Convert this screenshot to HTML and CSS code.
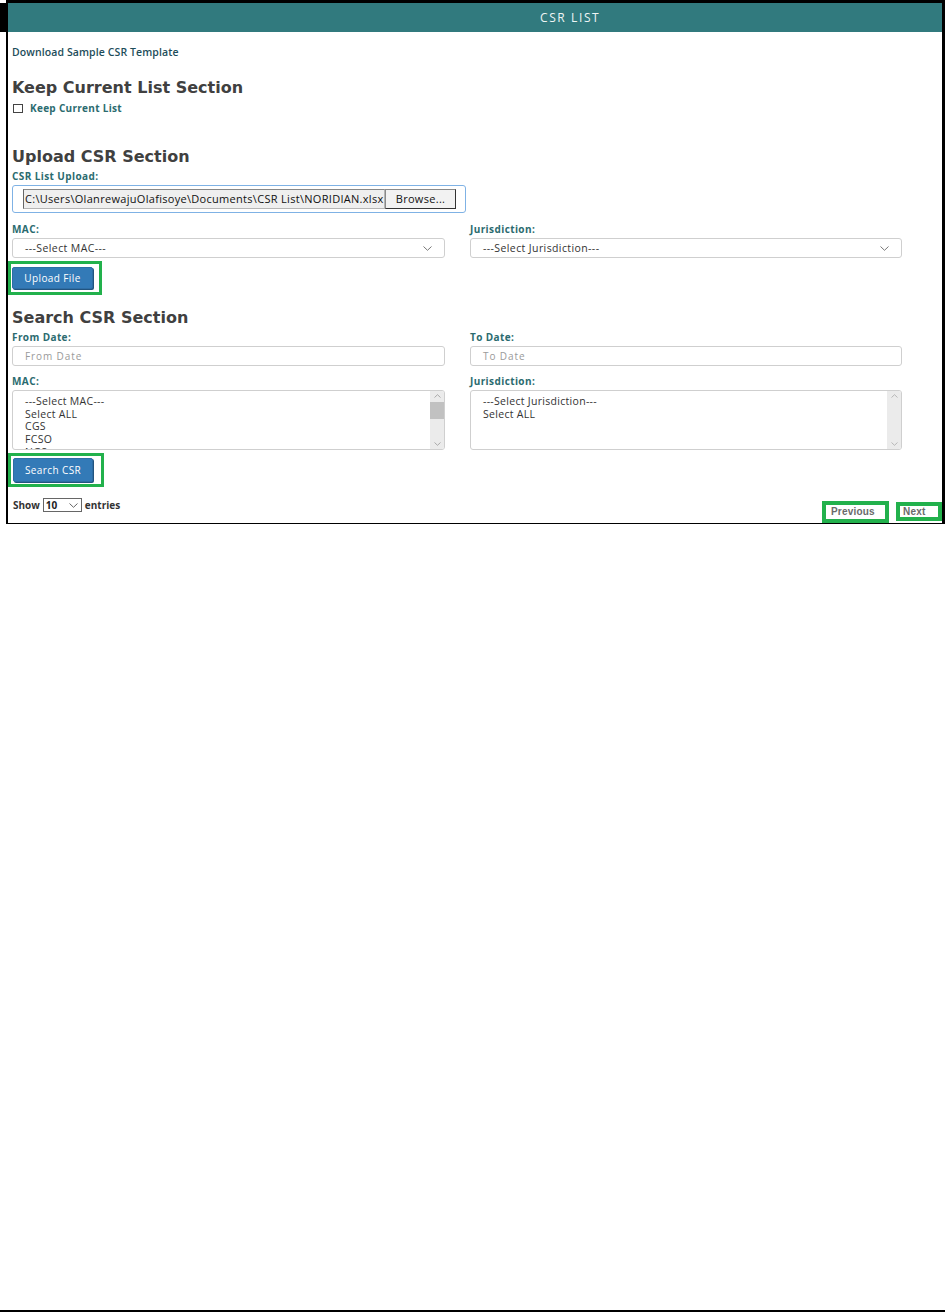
FILE: index.html
```html
<!DOCTYPE html>
<html lang="en">
<head>
  <meta charset="UTF-8" />
  <meta name="viewport" content="width=device-width, initial-scale=1.0"/>
  <title>CSR List</title>
  <link rel="stylesheet" href="styles.css">
</head>
<body>

<div class="shot">
  <header class="topbar">CSR LIST</header>

  <div class="content">
    <a class="download" href="#">Download Sample CSR Template</a>

    <h2 class="section-title first">Keep Current List Section</h2>
    <label class="check-row"><span class="checkbox"></span>Keep Current List</label>

    <h2 class="section-title upload-title">Upload CSR Section</h2>
    <div class="field-label gap-top">CSR List Upload:</div>
    <div class="file-box">
      <div class="file-path">C:\Users\OlanrewajuOlafisoye\Documents\CSR List\NORIDIAN.xlsx</div>
      <div class="browse">Browse...</div>
    </div>

    <div class="two-col upload-row">
      <div class="col left">
        <div class="field-label">MAC:</div>
        <div class="select">
          <span>---Select MAC---</span>
          <svg class="chev" width="9" height="5" viewBox="0 0 9 5"><path d="M0.5 0.5 L4.5 4.3 L8.5 0.5" fill="none" stroke="#777" stroke-width="1"/></svg>
        </div>
      </div>
      <div class="col right">
        <div class="field-label">Jurisdiction:</div>
        <div class="select">
          <span>---Select Jurisdiction---</span>
          <svg class="chev" width="9" height="5" viewBox="0 0 9 5"><path d="M0.5 0.5 L4.5 4.3 L8.5 0.5" fill="none" stroke="#777" stroke-width="1"/></svg>
        </div>
      </div>
    </div>

    <div class="hilite hilite-upload"><button class="btn-primary upload-btn">Upload File</button></div>

    <h2 class="section-title search-title">Search CSR Section</h2>

    <div class="two-col date-row">
      <div class="col left">
        <div class="field-label">From Date:</div>
        <div class="text-input">From Date</div>
      </div>
      <div class="col right">
        <div class="field-label">To Date:</div>
        <div class="text-input">To Date</div>
      </div>
    </div>

    <div class="two-col list-row">
      <div class="col left">
        <div class="field-label">MAC:</div>
        <div class="listbox">
          <div class="options">
            <div>---Select MAC---</div>
            <div>Select ALL</div>
            <div>CGS</div>
            <div>FCSO</div>
            <div>NGS</div>
          </div>
          <div class="scrollbar">
            <svg class="arrow" width="7" height="4" viewBox="0 0 7 4"><path d="M0.5 3.5 L3.5 0.7 L6.5 3.5" fill="none" stroke="#999" stroke-width="0.8"/></svg>
            <div class="thumb"></div>
            <div class="track"></div>
            <svg class="arrow" width="7" height="4" viewBox="0 0 7 4"><path d="M0.5 0.5 L3.5 3.3 L6.5 0.5" fill="none" stroke="#999" stroke-width="0.8"/></svg>
          </div>
        </div>
      </div>
      <div class="col right">
        <div class="field-label">Jurisdiction:</div>
        <div class="listbox">
          <div class="options">
            <div>---Select Jurisdiction---</div>
            <div>Select ALL</div>
          </div>
          <div class="scrollbar">
            <svg class="arrow" width="7" height="4" viewBox="0 0 7 4"><path d="M0.5 3.5 L3.5 0.7 L6.5 3.5" fill="none" stroke="#aaa" stroke-width="0.8"/></svg>
            <div class="track"></div>
            <svg class="arrow" width="7" height="4" viewBox="0 0 7 4"><path d="M0.5 0.5 L3.5 3.3 L6.5 0.5" fill="none" stroke="#aaa" stroke-width="0.8"/></svg>
          </div>
        </div>
      </div>
    </div>

    <div class="hilite hilite-search"><button class="btn-primary search-btn">Search CSR</button></div>

    <div class="table-foot">
      <div class="length">
        Show
        <span class="length-select">10
          <svg width="9" height="5" viewBox="0 0 9 5"><path d="M0.5 0.5 L4.5 4.3 L8.5 0.5" fill="none" stroke="#666" stroke-width="1"/></svg>
        </span>
        entries
      </div>
      <div class="pager">
        <span class="page-btn prev">Previous</span>
        <span class="page-btn next">Next</span>
      </div>
    </div>
  </div>
</div>

<div class="page-end"></div>

</body>
</html>
```

FILE: styles.css
```css
body { margin: 0; font-family: "Open Sans", "DejaVu Sans", sans-serif; background: #fff; color: #333; }

.shot {
  margin-left: 6px;
  border-top: 3px solid #000;
  border-left: 2px solid #000;
  border-right: 3px solid #000;
  border-bottom: 1px solid #000;
}
.topbar {
  height: 29px;
  line-height: 29px;
  background: #317a7e;
  color: #eef5f5;
  font-size: 12px;
  letter-spacing: 1.6px;
  padding-left: 532px;
  box-shadow: -8px 0 0 #000;
}
.content { padding: 13px 40px 0 4px; }

.download {
  display: block;
  font-size: 10.5px;
  line-height: 14px;
  font-weight: 600;
  color: #1d4d5a;
  text-decoration: none;
  letter-spacing: 0.1px;
}

.section-title {
  margin: 0;
  font-family: "DejaVu Sans", sans-serif;
  font-weight: bold;
  font-size: 16px;
  line-height: 18px;
  color: #404040;
}
.section-title.first { margin-top: 20px; }
.upload-title { margin-top: 33px; }
.search-title { margin-top: 14px; }

.check-row {
  display: flex;
  align-items: center;
  gap: 7px;
  margin-top: 4px;
  height: 14px;
  font-size: 10px;
  font-weight: bold;
  color: #2b6b6f;
  letter-spacing: 0.3px;
}
.checkbox {
  width: 8px;
  height: 7px;
  margin-left: 1px;
  border: 1px solid #444;
  background: #fff;
}

.field-label {
  font-size: 10px;
  line-height: 12px;
  font-weight: bold;
  color: #2b6b6f;
  letter-spacing: 0.4px;
  margin-bottom: 3px;
}
.gap-top { margin-top: 4px; }

.file-box {
  box-sizing: border-box;
  width: 454px;
  height: 28px;
  display: flex;
  align-items: center;
  padding: 0 9px 0 10px;
  border: 1px solid #7fb2e5;
  border-radius: 3px;
}
.file-path {
  flex: 1;
  box-sizing: border-box;
  height: 20px;
  line-height: 18px;
  padding-left: 1px;
  background: #efefef;
  border: 1px solid #b5b5b5;
  border-left-color: #666;
  border-top-color: #888;
  font-size: 11px;
  letter-spacing: 0.3px;
  color: #111;
  white-space: nowrap;
  overflow: hidden;
}
.browse {
  box-sizing: border-box;
  width: 71px;
  height: 20px;
  line-height: 18px;
  text-align: center;
  background: #f2f2f2;
  border: 1px solid #8a8a8a;
  border-right-color: #333;
  border-bottom-color: #333;
  font-size: 11px;
  letter-spacing: 0.3px;
  color: #111;
}

.two-col { display: flex; gap: 25px; }
.col.left { flex: 0 0 433px; }
.col.right { flex: 0 0 432px; }
.upload-row { margin-top: 10px; }
.date-row { margin-top: 4px; }
.list-row { margin-top: 9px; }

.select, .text-input {
  box-sizing: border-box;
  height: 20px;
  display: flex;
  align-items: center;
  justify-content: space-between;
  padding: 0 12px;
  border: 1px solid #cfcfcf;
  border-radius: 3px;
  font-size: 10.5px;
  letter-spacing: 0.4px;
  color: #333;
}
.text-input {
  justify-content: flex-start;
  color: #9a9a9a;
  font-size: 10px;
  letter-spacing: 0.9px;
}

.listbox {
  box-sizing: border-box;
  height: 60px;
  display: flex;
  border: 1px solid #cfcfcf;
  border-radius: 3px;
  overflow: hidden;
}
.options {
  flex: 1;
  padding: 4px 12px;
  font-size: 10.5px;
  line-height: 12.7px;
  letter-spacing: 0.3px;
  color: #333;
  overflow: hidden;
}
.scrollbar {
  width: 14px;
  display: flex;
  flex-direction: column;
  align-items: center;
  background: #ebebeb;
}
.scrollbar .arrow { margin: 3px 0; flex: none; }
.scrollbar .thumb { width: 14px; height: 17px; margin-top: 1px; background: #c1c1c1; }
.scrollbar .track { flex: 1; }

.hilite {
  width: fit-content;
  border: 3px solid #22b14c;
  margin: 3px 0 0 -4px;
  background: #fff;
}
.hilite-upload { padding: 3px 6px 3px 1px; }
.hilite-search { padding: 2px 8px 2px 2px; }

.btn-primary {
  display: block;
  box-sizing: border-box;
  background: #337ab7;
  color: #fff;
  border: 1px solid #2e6da4;
  border-radius: 2px;
  box-shadow: 1px 1px 0 #22547f;
  font-family: "Open Sans", sans-serif;
  font-size: 10px;
  letter-spacing: 0.4px;
  padding: 0;
  cursor: pointer;
}
.upload-btn { width: 81px; height: 22px; }
.search-btn { width: 80px; height: 24px; }

.table-foot {
  display: flex;
  justify-content: space-between;
  align-items: flex-start;
  margin-top: 10px;
  margin-right: -40px;
  height: 26px;
}
.length {
  display: flex;
  align-items: center;
  gap: 3px;
  margin-top: 1px;
  margin-left: 1px;
  font-size: 10px;
  line-height: 14px;
  font-weight: bold;
  color: #333;
}
.length-select {
  box-sizing: border-box;
  width: 39px;
  height: 14px;
  display: flex;
  align-items: center;
  justify-content: space-between;
  padding: 0 3px 0 2px;
  border: 1px solid #666;
  font-weight: bold;
  color: #222;
}
.pager { display: flex; gap: 7px; margin-top: 4px; }
.page-btn {
  box-sizing: border-box;
  border: 4px solid #22b14c;
  background: #fff;
  font-family: "Liberation Sans", Arial, sans-serif;
  font-weight: bold;
  font-size: 10px;
  color: #6a6a6a;
  letter-spacing: 0.2px;
}
.prev { width: 67px; height: 22px; line-height: 14px; padding-left: 5px; }
.next { width: 46px; height: 19px; line-height: 11px; padding-left: 3px; margin-top: 1px; }

.page-end { height: 2px; background: #000; margin-top: 786px; }
```
